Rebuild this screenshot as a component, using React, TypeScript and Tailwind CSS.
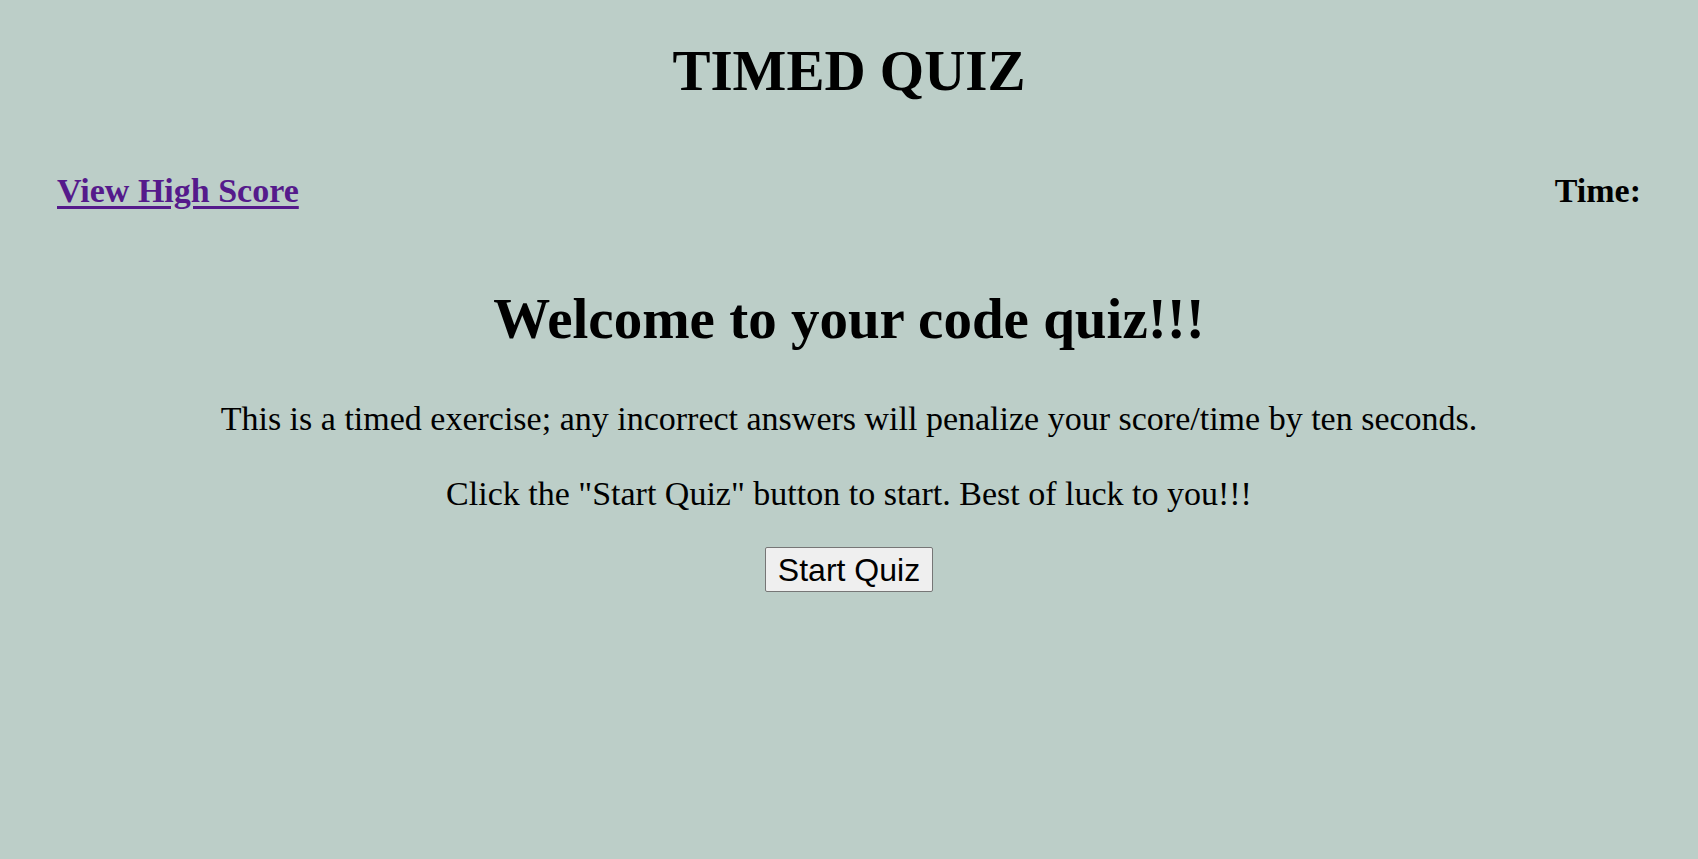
export default function App() {
  return (
    <div
      className="min-h-screen w-full bg-[#bccec8] text-black"
      style={{ fontFamily: '"Liberation Serif", "Times New Roman", serif' }}
    >
      {/* Title */}
      <h1 className="pt-[42px] text-center text-[57px] font-bold leading-none">
        TIMED QUIZ
      </h1>

      {/* Header row */}
      <div className="mt-[75px] flex items-center justify-between px-[57px] text-[34px] font-bold leading-none">
        <a href="#highscores" className="text-[#551a8b] underline underline-offset-[4px]">
          View High Score
        </a>
        <span>Time:</span>
      </div>

      {/* Intro */}
      <div className="mt-[82px] flex flex-col items-center text-center">
        <h2 className="text-[57px] font-bold leading-none">Welcome to your code quiz!!!</h2>
        <p className="mt-[55px] text-[34px] leading-none">
          This is a timed exercise; any incorrect answers will penalize your score/time by ten seconds.
        </p>
        <p className="mt-[41px] text-[34px] leading-none">
          Click the "Start Quiz" button to start. Best of luck to you!!!
        </p>
        <button
          className="mt-[36px] h-[45px] rounded-[2px] border border-[#767676] bg-[#efefef] px-[12px] text-[32px] leading-none text-black"
          style={{ fontFamily: '"Liberation Sans", Arial, sans-serif' }}
        >
          Start Quiz
        </button>
      </div>
    </div>
  );
}
